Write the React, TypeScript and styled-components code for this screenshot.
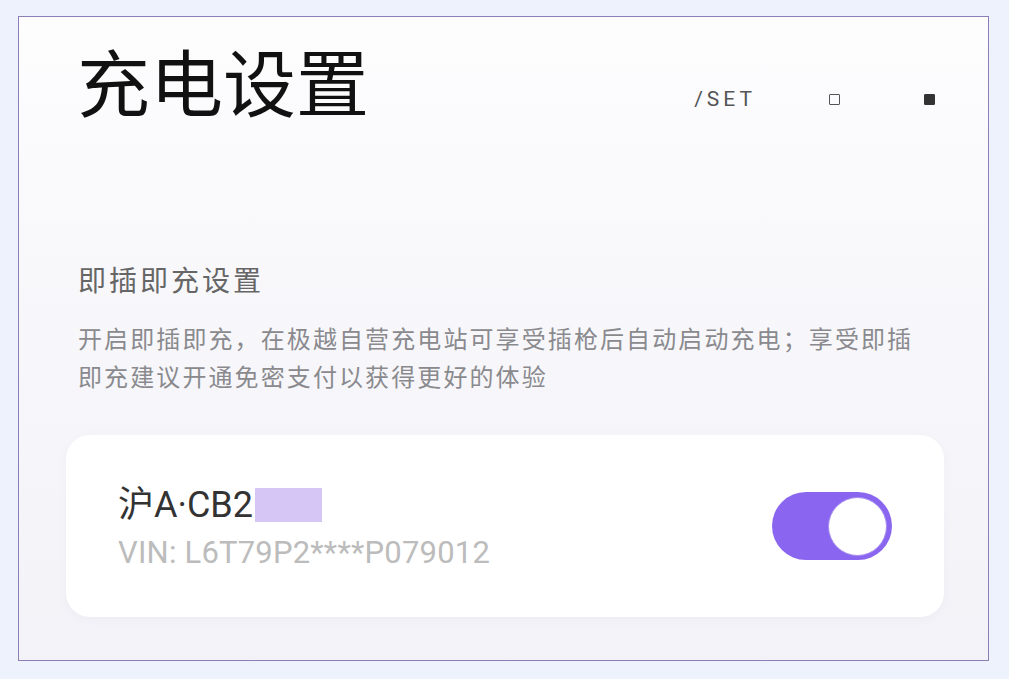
import React from "react";
import styled, { createGlobalStyle } from "styled-components";

const Global = createGlobalStyle`
  html, body { margin: 0; padding: 0; }
  body {
    background: #edf2fc;
    font-family: "Noto Sans CJK SC", "Noto Sans", sans-serif;
  }
`;

const Page = styled.div`
  width: 1009px;
  height: 679px;
  padding: 16px 20px 18px 18px;
  box-sizing: border-box;
  background: #edf2fc;
`;

const Panel = styled.div`
  width: 971px;
  height: 645px;
  box-sizing: border-box;
  border: 1px solid #8c7fb4;
  background: linear-gradient(180deg, #fdfdfe 0%, #f8f8fb 40%, #f3f2f8 100%);
  padding: 0 44px 0 59px;
  display: flex;
  flex-direction: column;
`;

const Header = styled.div`
  display: flex;
  align-items: flex-start;
  height: 142px;
`;

const Title = styled.h1`
  margin: 26px 0 0 -1px;
  font-size: 73px;
  font-weight: 400;
  line-height: 1;
  color: #111;
`;

const Tools = styled.div`
  margin-left: auto;
  display: flex;
  align-items: center;
  margin-top: 70px;
  padding-right: 9px;
`;

const SetLabel = styled.span`
  font-family: "Roboto", "Liberation Sans", sans-serif;
  font-size: 21px;
  letter-spacing: 4px;
  color: #555;
  margin-right: 73px;
`;

const Square = styled.span<{ $filled?: boolean }>`
  width: 11px;
  height: 11px;
  box-sizing: border-box;
  border: 1.5px solid ${(p) => (p.$filled ? "#333" : "#555")};
  background: ${(p) => (p.$filled ? "#333" : "transparent")};
  border-radius: 1px;
  margin-right: ${(p) => (p.$filled ? "0" : "84px")};
`;

const SectionTitle = styled.h2`
  margin: 100px 0 0 0;
  font-size: 28px;
  font-weight: 400;
  color: #666;
  letter-spacing: 3px;
  line-height: 40px;
`;

const Desc = styled.p`
  margin: 20px 0 0 0;
  font-size: 24px;
  line-height: 38px;
  letter-spacing: 2.1px;
  color: #8a8a8e;
  width: 850px;
`;

const Card = styled.div`
  margin: 40px 0 0 -12px;
  width: 878px;
  height: 182px;
  box-sizing: border-box;
  background: #ffffff;
  border-radius: 24px;
  padding: 0 52px 0 52px;
  display: flex;
  align-items: center;
  box-shadow: 0 2px 10px rgba(120, 110, 160, 0.05);
`;

const CarInfo = styled.div`
  display: flex;
  flex-direction: column;
  gap: 6px;
  margin-top: 4px;
`;

const Plate = styled.div`
  display: flex;
  align-items: center;
  font-family: "Roboto", "Noto Sans CJK SC", sans-serif;
  font-size: 36px;
  color: #333;
  line-height: 44px;
`;

const Masked = styled.span`
  display: inline-block;
  width: 67px;
  height: 34px;
  background: #d6c6f5;
  margin-left: 2px;
`;

const Vin = styled.div`
  font-family: "Roboto", "Liberation Sans", sans-serif;
  font-size: 31px;
  letter-spacing: 0.2px;
  color: #bcbcbc;
  line-height: 40px;
`;

const Toggle = styled.div<{ $on: boolean }>`
  margin-left: auto;
  width: 120px;
  height: 68px;
  border-radius: 34px;
  background: ${(p) => (p.$on ? "#8a66f0" : "#ddd")};
  display: flex;
  align-items: center;
  justify-content: ${(p) => (p.$on ? "flex-end" : "flex-start")};
  padding: 0 5px;
  box-sizing: border-box;
`;

const Knob = styled.div`
  width: 59px;
  height: 59px;
  border-radius: 50%;
  background: #fff;
  border: 1.5px solid #a58cf0;
  box-sizing: border-box;
`;

export default function App() {
  return (
    <>
      <Global />
      <Page>
        <Panel>
          <Header>
            <Title>充电设置</Title>
            <Tools>
              <SetLabel>/SET</SetLabel>
              <Square />
              <Square $filled />
            </Tools>
          </Header>
          <SectionTitle>即插即充设置</SectionTitle>
          <Desc>
            开启即插即充，在极越自营充电站可享受插枪后自动启动充电；享受即插即充建议开通免密支付以获得更好的体验
          </Desc>
          <Card>
            <CarInfo>
              <Plate>
                沪A·CB2
                <Masked />
              </Plate>
              <Vin>VIN: L6T79P2****P079012</Vin>
            </CarInfo>
            <Toggle $on>
              <Knob />
            </Toggle>
          </Card>
        </Panel>
      </Page>
    </>
  );
}
